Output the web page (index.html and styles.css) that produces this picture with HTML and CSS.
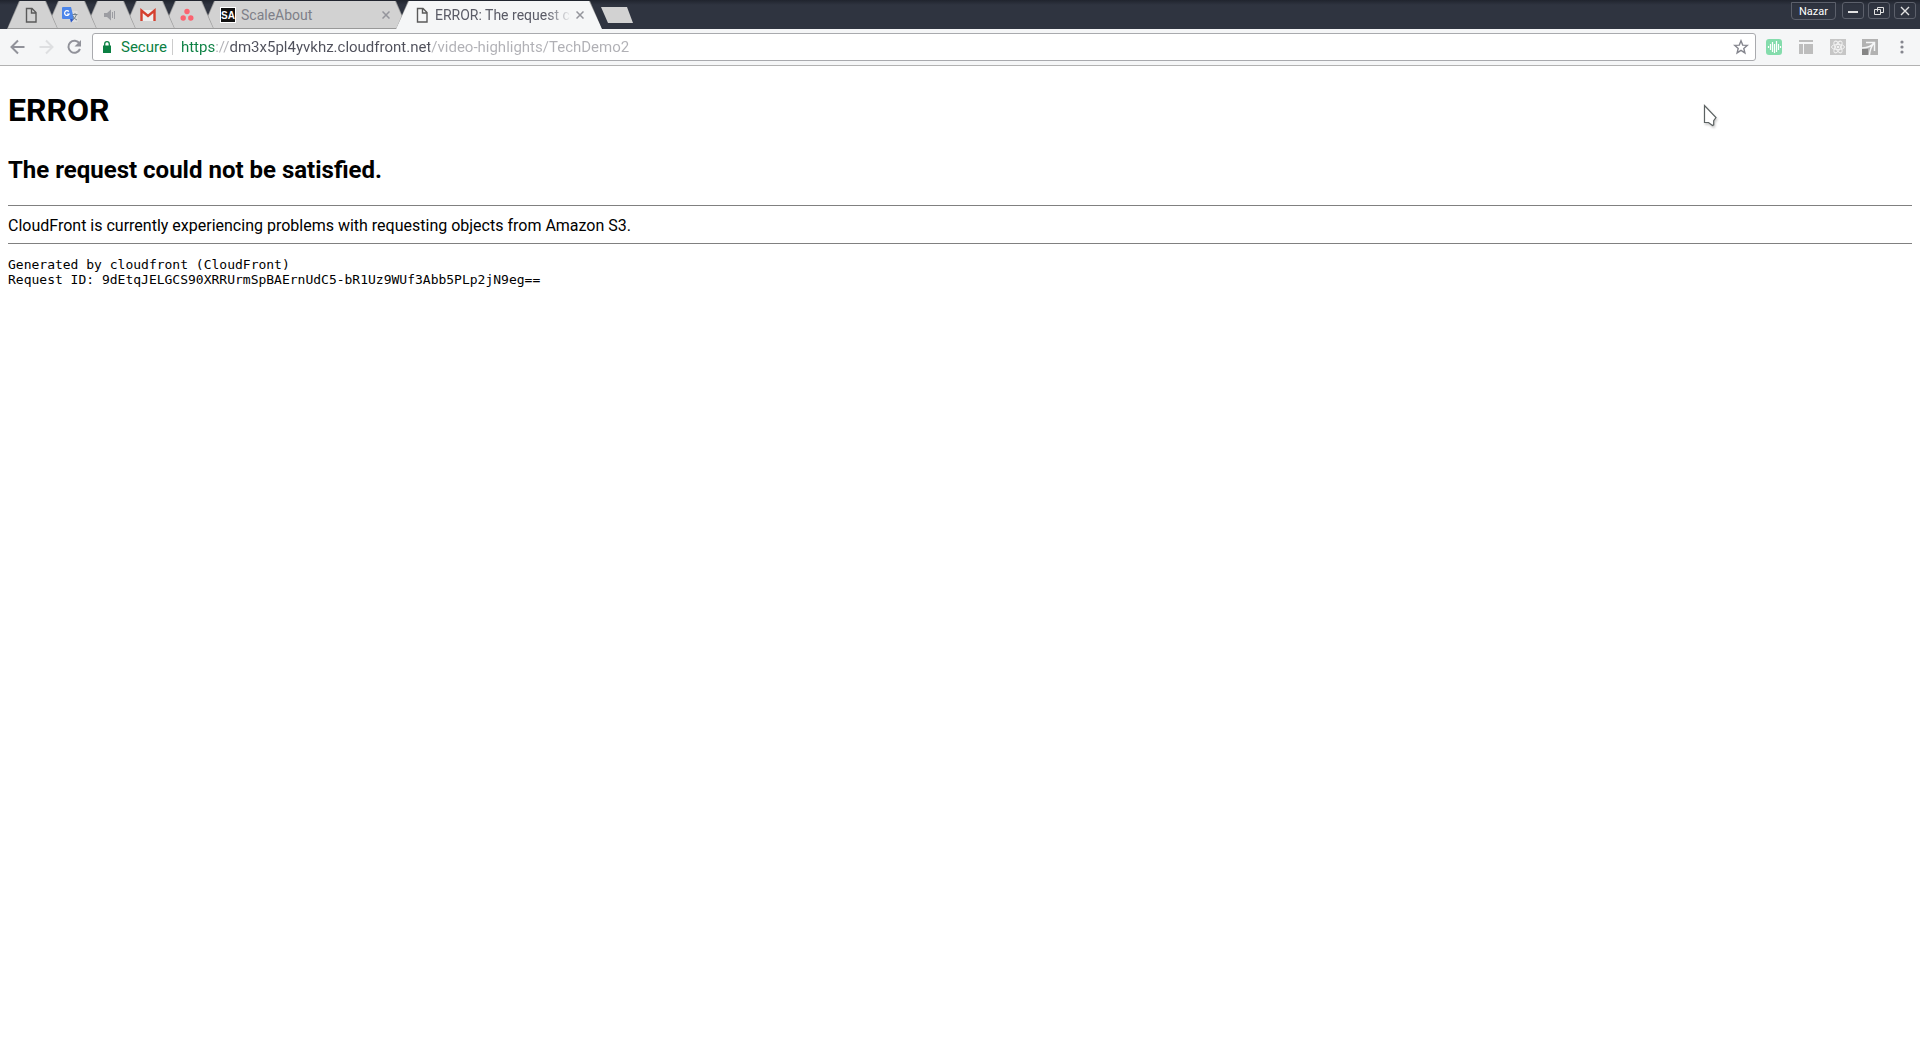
FILE: index.html
```html
<!DOCTYPE html>
<html lang="en">
<head>
<meta charset="utf-8">
<title>ERROR: The request could not be satisfied</title>
<link rel="stylesheet" href="styles.css">
</head>
<body>
<header class="browser">
  <div class="titlebar">
    <div class="tabs">
      <button class="tab pinned" aria-label="New page"><svg width="16" height="16" viewBox="0 0 16 16" fill="none" stroke="#5a5a5a" stroke-width="1.4"><path d="M3.500 1.500h5.500l4 4v9.500H3.500zM8.500 1.500v4.500H13"/></svg></button>
      <button class="tab pinned" aria-label="Translate"><svg width="16" height="16" viewBox="0 0 16 16"><path d="M6 4h9.500v11H9z" fill="#dedede"/><path d="M0 1q0-1 1-1h8l3 12H1q-1 0-1-1z" fill="#4c86ea"/><path d="M8 12h4l-3 3.500z" fill="#2855c8"/><path d="M6.800 4.500A2.400 2.400 0 1 0 7.200 7H5" fill="none" stroke="#fff" stroke-width="1.200"/><path d="M10.500 7.500h5M13 6v1.500M14.500 7.500q-1 4-4 5M11 9q1 3 4 4" fill="none" stroke="#74828c"/></svg></button>
      <button class="tab pinned" aria-label="Audio"><svg width="16" height="16" viewBox="0 0 16 16" fill="#9c9da2"><path d="M3 6h3l4-3.500v11L6 10H3z"/><path d="M11 5h1v6h-1zM13 4h1v8h-1z"/></svg></button>
      <button class="tab pinned" aria-label="Mail"><svg width="16" height="16" viewBox="0 0 16 16"><path d="M1 3h14v11H1z" fill="#eee"/><path d="M1.500 14V3.500L8 9l6.500-5.500V14" fill="none" stroke="#d5402f" stroke-width="2.400"/></svg></button>
      <button class="tab pinned" aria-label="Tasks"><svg width="16" height="16" viewBox="0 0 16 16" fill="#fb6370"><circle cx="8" cy="4.500" r="2.700"/><circle cx="4.200" cy="11" r="2.700"/><circle cx="11.800" cy="11" r="2.700"/></svg></button>
      <button class="tab wide"><svg width="16" height="16" viewBox="0 0 16 16"><path d="M0 0h16v16H0z" fill="#fff"/><path d="M1 1h14v14H1z" fill="#111"/><text x="8" y="12" text-anchor="middle" class="mark">SA</text></svg><span class="tab-title">ScaleAbout</span><svg class="x" width="8" height="8" viewBox="0 0 8 8"><path d="M.5.500l7 7m0-7l-7 7"/></svg></button>
      <button class="tab wide active"><svg width="16" height="16" viewBox="0 0 16 16" fill="none" stroke="#5a5a5a" stroke-width="1.400"><path d="M3.500 1.500h5.500l4 4v9.500H3.500zM8.500 1.500v4.500H13"/></svg><span class="tab-title fade">ERROR: The request could not be satisfied</span><svg class="x" width="8" height="8" viewBox="0 0 8 8"><path d="M.5.500l7 7m0-7l-7 7"/></svg></button>
      <button class="new-tab" aria-label="New tab"></button>
    </div>
    <div class="window-buttons">
      <button class="user">Nazar</button>
      <button class="win" aria-label="Minimize"><svg width="12" height="12" viewBox="0 0 12 12"><path d="M1 7h10" stroke-width="2"/></svg></button>
      <button class="win" aria-label="Restore"><svg width="12" height="12" viewBox="0 0 12 12"><path d="M4.500 6.500v-4h6v5h-3M1.500 4.500h6v5h-6z"/></svg></button>
      <button class="win" aria-label="Close"><svg width="12" height="12" viewBox="0 0 12 12"><path d="M2 2l8 8m0-8l-8 8" stroke-width="1.400"/></svg></button>
    </div>
  </div>
  <div class="toolbar">
    <button class="nav" aria-label="Back"><svg width="16" height="16" viewBox="0 0 16 16"><path d="M14.500 8H2.500M8 1.500L1.500 8 8 14.500"/></svg></button>
    <button class="nav off" aria-label="Forward"><svg width="16" height="16" viewBox="0 0 16 16"><path d="M1.500 8h12M8 1.500L14.500 8 8 14.500"/></svg></button>
    <button class="nav" aria-label="Reload"><svg width="16" height="16" viewBox="0 0 16 16"><path d="M13.500 4.500A6 6 0 1 0 14 10"/><path d="M15 1v6.500H8.500z" fill="#91929a" stroke="none"/></svg></button>
    <div class="omnibox">
      <svg width="8" height="12" viewBox="0 0 8 12"><path d="M0 4.500h8V12H0z" fill="#0b8043"/><path d="M1.700 5V3a2.300 2.300 0 0 1 4.600 0v2" fill="none" stroke="#0b8043" stroke-width="1.300"/></svg>
      <label class="secure" for="url">Secure</label>
      <input class="url" id="url" type="text" spellcheck="false" value="https://dm3x5pl4yvkhz.cloudfront.net/video-highlights/TechDemo2">
      <button class="star" aria-label="Bookmark"><svg width="16" height="16" viewBox="0 0 16 16" fill="none" stroke="#85868e" stroke-width="1.400"><path d="M8 1.800l1.700 4.300 4.600.300-3.500 3 1.100 4.500L8 11.400l-3.900 2.500 1.100-4.500-3.500-3 4.600-.300z"/></svg></button>
    </div>
    <div class="extensions">
      <button aria-label="Voice"><svg width="16" height="16" viewBox="0 0 16 16"><rect width="16" height="16" rx="3" fill="#84dcac"/><path d="M2.500 7v2M4.500 5v6M6.500 3v10M8.500 5v9M10.500 2v11M12.500 5v6M14.500 7v2" stroke="#fff" stroke-width="1.200"/></svg></button>
      <button aria-label="Layout"><svg width="16" height="16" viewBox="0 0 16 16" fill="#bdbdbd"><path d="M1 5h4v10H1zM6 5h9v10H6z"/><path d="M1 1h14v2H1z"/></svg></button>
      <button aria-label="React tools"><svg width="16" height="16" viewBox="0 0 16 16"><path d="M0 0h16v16H0z" fill="#c6c6c6"/><g fill="none" stroke="#f2f2f2"><ellipse cx="8" cy="8" rx="6.500" ry="2.600"/><ellipse cx="8" cy="8" rx="6.500" ry="2.600" transform="rotate(60 8 8)"/><ellipse cx="8" cy="8" rx="6.500" ry="2.600" transform="rotate(120 8 8)"/></g><circle cx="8" cy="8" r="1.300" fill="#f2f2f2"/></svg></button>
      <button aria-label="Resize"><svg width="16" height="16" viewBox="0 0 16 16"><path d="M0 0h16v16H0z" fill="#b2b2b2"/><path d="M4 3.500h8.500V12M12 4Q9 8.500 0 9M12 4Q8 9 7.500 16" fill="none" stroke="#f5f6f7" stroke-width="1.500"/><path d="M0 10h6v6H0z" fill="#858585"/></svg></button>
    </div>
    <button class="more" aria-label="Menu"><svg width="4" height="16" viewBox="0 0 4 16" fill="#85868e"><circle cx="2" cy="3" r="1.600"/><circle cx="2" cy="8" r="1.600"/><circle cx="2" cy="13" r="1.600"/></svg></button>
  </div>
</header>
<main class="page">
  <h1>ERROR</h1>
  <h2>The request could not be satisfied.</h2>
  <hr>
  <p>CloudFront is currently experiencing problems with requesting objects from Amazon S3.</p>
  <hr>
  <pre>Generated by cloudfront (CloudFront)
Request ID: 9dEtqJELGCS90XRRUrmSpBAErnUdC5-bR1Uz9WUf3Abb5PLp2jN9eg==</pre>
</main>
<svg class="pointer" width="16" height="24" viewBox="0 0 16 24"><path d="M1.500 1.500v17h4l4 3 1.200-.600v-4.300l2.300-3z" fill="#fff" stroke="#5c6262" stroke-width="1.200"/></svg>
</body>
</html>
```
FILE: styles.css
```css
* { box-sizing: border-box; }
body { margin: 0; background: #fff; color: #000; font-family: Roboto, sans-serif; font-size: 16px; }
button { margin: 0; padding: 0; border: 0; background: none; color: inherit; font: inherit; }
svg { display: block; flex: none; }

.titlebar { display: flex; justify-content: space-between; height: 29px; background: linear-gradient(#20242e, #2f3440 5px); }
.tabs { display: flex; padding: 1px 0 0 7px; }
.tab {
  position: relative; isolation: isolate; display: flex; align-items: center; justify-content: center;
  height: 28px; margin-right: -12px; background: #999; color: #7e7f88; font-size: 14px;
  clip-path: polygon(12px 0, calc(100% - 12px) 0, 100% 100%, 0 100%);
}
.tab::before {
  content: ""; position: absolute; inset: 0; z-index: -1; background: #d2d2d2;
  clip-path: polygon(13px 0, calc(100% - 13px) 0, calc(100% - 1px) 27px, 1px 27px);
}
.pinned { width: 51px; padding-right: 4px; }
.wide { width: 206px; padding: 0 18px; justify-content: flex-start; gap: 5px; }
.tab:nth-child(1) { z-index: 6; }
.tab:nth-child(2) { z-index: 5; }
.tab:nth-child(3) { z-index: 4; }
.tab:nth-child(4) { z-index: 3; }
.tab:nth-child(5) { z-index: 2; }
.active { z-index: 7; color: #5a5b66; }
.active::before { background: #f5f6f7; clip-path: polygon(13px 0, calc(100% - 13px) 0, 100% 100%, 0 100%); }
.tab-title { flex: 1; overflow: hidden; white-space: nowrap; text-align: left; }
.fade { mask-image: linear-gradient(to right, #000 calc(100% - 24px), transparent); }
.mark { font: bold 10px "Liberation Sans", sans-serif; fill: #fff; }
.x { stroke: #94959c; stroke-width: 1.5; }
.new-tab { width: 32px; height: 16px; margin: 6px 0 0 11px; background: #d2d2d2; clip-path: polygon(0 0, 26px 0, 100% 100%, 7px 100%); }

.window-buttons { display: flex; gap: 4px; padding: 2px 4px 0 0; }
.user { width: 45px; height: 18px; margin-right: 2px; border: 1px solid #5c606b; border-radius: 0 0 4px 4px; color: #fff; font-size: 11px; }
.win { display: grid; place-items: center; width: 22px; height: 17px; border: 1px solid #5c606b; border-radius: 3px; }
.win svg { fill: none; stroke: #e2e2e2; }

.toolbar { display: flex; align-items: center; height: 37px; padding: 0 16px 0 10px; border-bottom: 1px solid #b2b2b2; background: #f5f6f7; }
.nav { width: 16px; margin-right: 12px; }
.nav svg { fill: none; stroke: #91929a; stroke-width: 2; }
.off svg { stroke: #dedfe1; }
.omnibox { display: flex; flex: 1; align-items: center; height: 28px; margin-left: -2px; padding: 0 6px 0 10px; border: 1px solid #a9aaae; border-radius: 3px; background: #fff; font-size: 15px; }
.secure { margin: 0 8px 0 10px; padding-right: 5px; border-right: 1px solid #ccc; color: #0b8043; line-height: 16px; }
.url {
  flex: 1; min-width: 0; padding: 0; border: 0; outline: 0; font: inherit; color: transparent;
  background: linear-gradient(to right, #0b8043 34px, #b0b0b5 34px 49px, #4f505b 49px 249px, #b0b0b5 249px);
  background-clip: text; -webkit-background-clip: text;
}
.extensions { display: flex; gap: 16px; margin: 0 22px 0 10px; }

.page { padding: 0 8px; }
h1 { margin: 25px 0; font-size: 32px; line-height: 38px; }
h2 { margin: 0 0 19px; font-size: 24px; line-height: 32px; }
hr { margin: 8px 0; border: 0; border-top: 1px solid #808080; }
p { margin: 0; padding-top: 2px; line-height: 19px; }
hr + p + hr { margin-bottom: 13px; }
pre { margin: 0; font: 13px/15px "DejaVu Sans Mono", monospace; }
.pointer { position: absolute; top: 104px; left: 88.7%; filter: drop-shadow(1px 2px 1px #0003); }
```
